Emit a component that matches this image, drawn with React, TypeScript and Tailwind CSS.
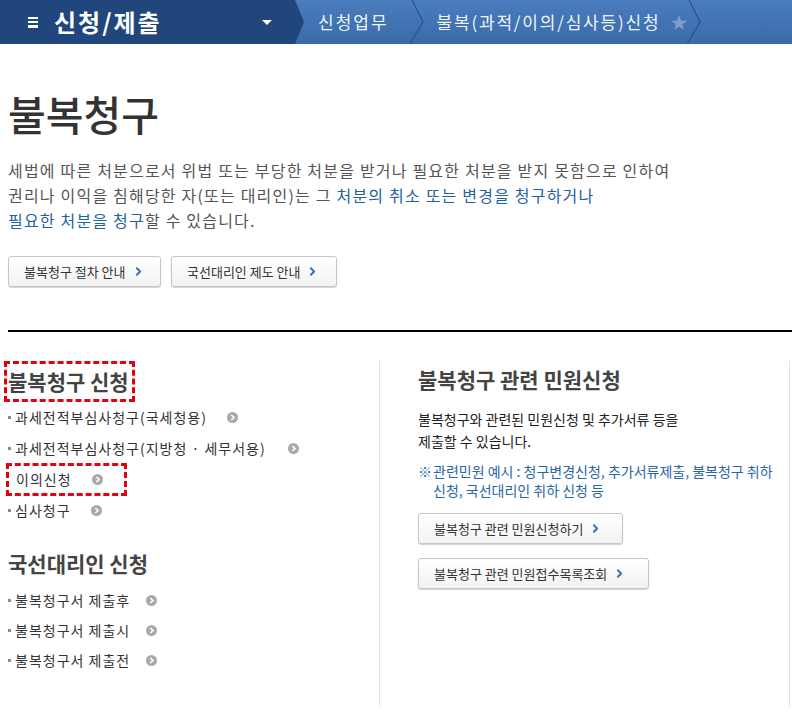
import { ChevronRight } from "lucide-react";

const font = "font-['Noto_Sans_CJK_KR','Noto_Sans',sans-serif]";

const Separator = () => (
  <svg width="14" height="44" viewBox="0 0 14 44" className="shrink-0">
    <path d="M2 0 L13 22 L0 44" fill="none" stroke="#285290" strokeWidth="1.2" />
  </svg>
);

const CircleArrow = ({ className = "" }: { className?: string }) => (
  <svg width="11" height="11" viewBox="0 0 11 11" className={className}>
    <circle cx="5.5" cy="5.5" r="5.5" fill="#a9a9a9" />
    <path d="M4.3 3 L7 5.5 L4.3 8" fill="none" stroke="#fff" strokeWidth="1.6" />
  </svg>
);

const GuideButton = ({ label, className = "" }: { label: string; className?: string }) => (
  <button
    className={`flex h-[31px] items-center rounded-[3px] border border-[#c6c6c6] bg-gradient-to-b from-white to-[#f2f2f2] pl-[15px] pr-[12px] text-[13px] text-[#333] shadow-[0_1px_1px_rgba(0,0,0,0.18)] ${className}`}
  >
    <span>{label}</span>
    <ChevronRight className="ml-[6px] h-[13px] w-[13px] text-[#3a6db4]" strokeWidth={3.5} />
  </button>
);

const ListItem = ({ label, gap = "ml-[20px]" }: { label: string; gap?: string }) => (
  <li className="flex h-[31px] items-center">
    <span className="mr-[4px] h-[3px] w-[3px] bg-[#8a8a8a]" />
    <span className="text-[14px] tracking-[1px] text-[#333]">{label}</span>
    <CircleArrow className={gap} />
  </li>
);

const SmallItem = ({ label }: { label: string }) => (
  <li className="flex h-[30px] items-center">
    <span className="mr-[4px] h-[3px] w-[3px] bg-[#8a8a8a]" />
    <span className="text-[14px] tracking-[1px] text-[#333]">{label}</span>
    <CircleArrow className="ml-[16px]" />
  </li>
);

export default function App() {
  return (
    <div className={`min-h-[728px] w-[792px] overflow-hidden bg-white ${font}`}>
      {/* 상단 내비게이션 */}
      <nav className="flex h-[44px] items-center bg-gradient-to-b from-[#4a7dbd] to-[#3a6aa9]">
        <div className="flex h-full w-[304px] shrink-0 items-center bg-[#21467b] pl-[28px] [clip-path:polygon(0_0,295px_0,304px_50%,295px_100%,0_100%)]">
          <div className="flex h-[11px] w-[10px] flex-col justify-between">
            <span className="h-[2.5px] w-full bg-white" />
            <span className="h-[2.5px] w-full bg-white" />
            <span className="h-[2.5px] w-full bg-white" />
          </div>
          <span className="ml-[16px] text-[24px] font-bold tracking-[2px] text-white">신청/제출</span>
          <span className="ml-[100px] h-0 w-0 border-x-[5px] border-t-[5px] border-x-transparent border-t-white" />
        </div>
        <span className="ml-[14px] text-[17px] tracking-[2px] text-[#eef3fa]">신청업무</span>
        <span className="ml-[21px]">
          <Separator />
        </span>
        <span className="ml-[13px] text-[17px] tracking-[1.8px] text-[#eef3fa]">불복(과적/이의/심사등)신청</span>
        <span className="ml-[10px] text-[17px] text-[#7f9fc9]">★</span>
        <Separator />
      </nav>

      <main className="pl-[8px]">
        <h1 className="mt-[46px] text-[41px] font-medium leading-[46px] text-[#333]">불복청구</h1>

        <p className="mt-[22px] text-[16px] leading-[25px] tracking-[1.2px] text-[#555]">
          세법에 따른 처분으로서 위법 또는 부당한 처분을 받거나 필요한 처분을 받지 못함으로 인하여
          <br />
          권리나 이익을 침해당한 자(또는 대리인)는 그{" "}
          <span className="text-[#23629e]">처분의 취소 또는 변경을 청구하거나</span>
          <br />
          <span className="text-[#23629e]">필요한 처분을 청구</span>할 수 있습니다.
        </p>

        <div className="mt-[23px] flex gap-[10px]">
          <GuideButton label="불복청구 절차 안내" className="w-[153px]" />
          <GuideButton label="국선대리인 제도 안내" className="w-[166px]" />
        </div>

        <hr className="mt-[43px] border-t-2 border-black" />

        <div className="mt-[29px] flex h-[345px] w-[782px]">
          {/* 왼쪽 열 */}
          <section className="w-[372px] border-r border-[#e3e3e3]">
            <div className="-ml-[4px] inline-flex h-[41px] items-center border-[3px] border-dashed border-[#e3000f] pl-[1px] pr-[3px]">
              <h2 className="text-[21px] font-semibold text-[#444]">불복청구 신청</h2>
            </div>
            <ul>
              <ListItem label="과세전적부심사청구(국세청용)" />
              <ListItem label="과세전적부심사청구(지방청 · 세무서용)" gap="ml-[22px]" />
              <li className="flex h-[31px] items-center">
                <div className="-ml-[2px] flex h-[33px] w-[121px] items-center border-[3px] border-dashed border-[#e3000f] pl-[7px]">
                  <span className="text-[14px] tracking-[1px] text-[#333]">이의신청</span>
                  <CircleArrow className="ml-[20px]" />
                </div>
              </li>
              <ListItem label="심사청구" />
            </ul>

            <h2 className="mt-[22px] h-[30px] text-[21px] font-semibold leading-[30px] text-[#444]">국선대리인 신청</h2>
            <ul className="mt-[7px]">
              <SmallItem label="불복청구서 제출후" />
              <SmallItem label="불복청구서 제출시" />
              <SmallItem label="불복청구서 제출전" />
            </ul>
          </section>

          {/* 오른쪽 열 */}
          <section className="flex-1 border-r border-[#e3e3e3] pl-[38px] pt-[3px]">
            <h2 className="text-[21px] font-semibold leading-[30px] text-[#444]">불복청구 관련 민원신청</h2>
            <p className="mt-[14px] text-[14px] leading-[22px] text-[#222]">
              불복청구와 관련된 민원신청 및 추가서류 등을
              <br />
              제출할 수 있습니다.
            </p>
            <div className="mt-[10px] flex text-[14px] leading-[19px] text-[#2a66a5]">
              <span className="w-[15px] shrink-0">※</span>
              <span className="whitespace-nowrap">
                관련민원 예시 : 청구변경신청, 추가서류제출, 불복청구 취하
                <br />
                신청, 국선대리인 취하 신청 등
              </span>
            </div>
            <div className="mt-[13px] flex flex-col items-start gap-[14px]">
              <GuideButton label="불복청구 관련 민원신청하기" className="w-[205px]" />
              <GuideButton label="불복청구 관련 민원접수목록조회" className="w-[231px]" />
            </div>
          </section>
        </div>
      </main>
    </div>
  );
}
